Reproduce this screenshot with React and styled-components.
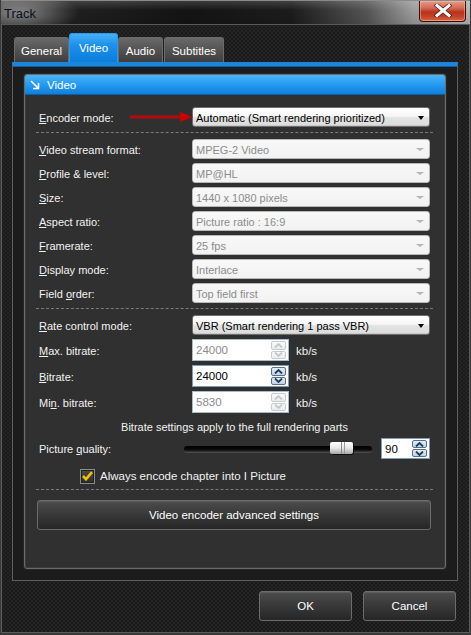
import React from "react";
import styled, { createGlobalStyle } from "styled-components";

const FONT = `"Liberation Sans", Arial, sans-serif`;

const GlobalStyle = createGlobalStyle`
  html, body { margin: 0; padding: 0; background: #000; }
  body { font-family: ${FONT}; font-size: 11px; }
  * { box-sizing: border-box; }
`;

const Window = styled.div`
  width: 471px;
  height: 635px;
  display: flex;
  flex-direction: column;
  background-color: #1d1d1d;
  background-image: repeating-conic-gradient(#252525 0 25%, #1a1a1a 0 50%);
  background-size: 4px 4px;
  border: 1px solid #3a3a3a;
  border-top: none;
  border-bottom-width: 2px;
  box-shadow: inset 1px 0 0 #5c5c5c, inset -1px 0 0 #5c5c5c, inset 0 -1px 0 #5c5c5c;
  font-family: ${FONT};
  overflow: hidden;
`;

const TitleBar = styled.div`
  height: 25px;
  flex: none;
  display: flex;
  align-items: center;
  justify-content: space-between;
  padding: 0 4px 0 3px;
  background:
    linear-gradient(180deg, rgba(255,255,255,0.16) 0, rgba(255,255,255,0) 40%, rgba(0,0,0,0.1) 100%),
    radial-gradient(ellipse 60px 22px at 18px 12px, rgba(150,150,150,0.85) 0, rgba(120,120,120,0.5) 55%, rgba(0,0,0,0) 100%),
    linear-gradient(90deg, #3a3a3a 0, #202020 14%, #141414 40%, #1c1c1c 62%, #555 78%, #9c9c9c 88%, #b4b4b4 100%);
  border-top: 1px solid #8a8a8a;
  border-bottom: 1px solid #5a5a5a;
`;

const TitleText = styled.span`
  font-size: 13px;
  color: #06101c;
  margin-top: 1px;
`;

const CloseButton = styled.div`
  width: 47px;
  height: 21px;
  margin-top: -3px;
  border: 1px solid #3a0f08;
  border-top: none;
  border-radius: 0 0 4px 4px;
  background: linear-gradient(180deg, #e89a88 0, #d26a55 35%, #b8321c 55%, #c4442a 80%, #d86a48 100%);
  box-shadow: inset 0 0 0 1px rgba(255, 200, 180, 0.45);
  display: flex;
  align-items: center;
  justify-content: center;
`;

const Body = styled.div`
  flex: 1;
  display: flex;
  flex-direction: column;
  padding: 8px 12px 0 11px;
`;

const TabStrip = styled.div`
  height: 29px;
  display: flex;
  align-items: flex-end;
  padding-left: 2px;
`;

const Tab = styled.div`
  width: ${p => p.$w}px;
  height: ${p => (p.$active ? 29 : 25)}px;
  margin-right: ${p => (p.$gap ? 1 : 0)}px;
  display: flex;
  align-items: center;
  justify-content: center;
  color: #fff;
  font-size: 11.5px;
  padding-top: ${p => (p.$active ? 0 : 1)}px;
  border: 1px solid ${p => (p.$active ? "#2a9af0" : "#6a6a6a")};
  border-bottom: none;
  border-radius: 3px 3px 0 0;
  background: ${p =>
    p.$active
      ? "linear-gradient(180deg, #44b0f6 0, #1d90ea 40%, #0b7ddc 100%)"
      : "linear-gradient(180deg, #6a6a6a 0, #555 45%, #3e3e3e 100%)"};
`;

const Panel = styled.div`
  height: 519px;
  display: flex;
  flex-direction: column;
  padding: 8px 11px 0 11px;
  background: #1c1c1c;
  border: 1px solid #5e5e5e;
  border-top: 4px solid #1a86dc;
  box-shadow: inset 0 1px 0 #0d5fa8;
`;

const Group = styled.div`
  height: 495px;
  display: flex;
  flex-direction: column;
  background: #303030;
  border: 1px solid #6a6a6a;
  border-radius: 3px;
  box-shadow: 0 0 0 1px #262626, inset 0 0 0 1px #3c3c3c;
  overflow: hidden;
`;

const GroupHeader = styled.div`
  height: 20px;
  flex: none;
  display: flex;
  align-items: center;
  gap: 7px;
  padding-left: 5px;
  color: #fff;
  font-size: 11.5px;
  background: linear-gradient(180deg, #4ab6f8 0, #2a9cf0 45%, #0f80de 100%);
  border-bottom: 1px solid #0a5fa8;
`;

const GroupBody = styled.div`
  display: flex;
  flex-direction: column;
  padding: 12px 15px 0 14px;
`;

const FieldRow = styled.div`
  position: relative;
  display: grid;
  grid-template-columns: 153px 1fr;
  align-items: center;
  height: 20px;
`;

const Label = styled.span`
  color: #f2f2f2;
  font-size: 11px;
  white-space: nowrap;
  padding-top: 1px;
`;

const Combo = styled.div`
  height: 20px;
  display: flex;
  align-items: center;
  justify-content: space-between;
  padding: 1px 5px 0 3px;
  border: 1px solid ${p => (p.$enabled ? "#6e6e6e" : "#b8b8b8")};
  border-radius: 3px;
  color: ${p => (p.$enabled ? "#000" : "#8c8c8c")};
  font-size: 11px;
  white-space: nowrap;
  background: ${p =>
    p.$enabled
      ? "linear-gradient(180deg, #ffffff 0, #f6f6f6 45%, #e2e2e2 55%, #dcdcdc 100%)"
      : "linear-gradient(180deg, #f8f8f8 0, #f2f2f2 100%)"};
  box-shadow: ${p => (p.$enabled ? "inset 0 -1px 0 #c8c8c8" : "none")};
`;

const ComboArrow = styled.span`
  width: 0;
  height: 0;
  border-left: ${p => (p.$enabled ? 3.5 : 4.5)}px solid transparent;
  border-right: ${p => (p.$enabled ? 3.5 : 4.5)}px solid transparent;
  border-top: ${p => (p.$enabled ? 4 : 3)}px solid ${p => (p.$enabled ? "#000" : "#b4b4b4")};
`;

const Divider = styled.div`
  height: 0;
  border-top: 1px dashed #7c7c7c;
  margin: ${p => p.$mt}px -3px ${p => p.$mb}px -3px;
`;

const Stack = styled.div`
  display: flex;
  flex-direction: column;
  gap: ${p => p.$gap}px;
  margin-top: ${p => p.$mt || 0}px;
`;

const SpinRow = styled.div`
  display: grid;
  grid-template-columns: 153px 97px auto;
  align-items: center;
  height: 22px;
`;

const SpinBox = styled.div`
  width: ${p => p.$w}px;
  height: ${p => p.$h || 22}px;
  display: flex;
  align-items: center;
  justify-content: space-between;
  padding: 1px 2px 1px 3px;
  background: #fff;
  border: 1px solid ${p => (p.$enabled ? "#7f9db9" : "#a9bccd")};
  color: ${p => (p.$enabled ? "#000" : "#8c8c8c")};
  font-size: 11.5px;
`;

const SpinButtons = styled.div`
  width: 15px;
  align-self: stretch;
  display: flex;
  flex-direction: column;
  gap: 1px;
`;

const SpinBtn = styled.div`
  flex: 1;
  display: flex;
  align-items: center;
  justify-content: center;
  border: 1px solid ${p => (p.$enabled ? "#56708e" : "#c4ccd6")};
  border-radius: 2px;
  background: ${p =>
    p.$enabled
      ? "linear-gradient(180deg, #e4ecf6 0, #c2d2e4 100%)"
      : "linear-gradient(180deg, #fafafa 0, #ececec 100%)"};
`;

const Unit = styled.span`
  color: #f2f2f2;
  font-size: 11.5px;
  padding-left: 7px;
  padding-top: 2px;
`;

const Note = styled.div`
  margin-top: 7px;
  height: 14px;
  text-align: center;
  color: #f2f2f2;
  font-size: 11px;
  line-height: 14px;
`;

const QualityRow = styled.div`
  display: flex;
  align-items: center;
  height: 21px;
  margin-top: 4px;
`;

const QualityLabel = styled(Label)`
  width: 145px;
`;

const SliderTrack = styled.div`
  position: relative;
  width: 189px;
  height: 6px;
  margin-right: 9px;
  border-radius: 3px;
  background: linear-gradient(180deg, #000 0, #0a0a0a 60%, #3a3a3a 100%);
  box-shadow: 0 1px 0 #4a4a4a;
`;

const SliderThumb = styled.div`
  position: absolute;
  left: 146px;
  top: -4px;
  width: 23px;
  height: 12px;
  border-radius: 2px;
  background:
    linear-gradient(90deg, transparent 0 11px, #8a8a8a 11px 12px, transparent 12px 14px, #9a9a9a 14px 15px, transparent 15px),
    linear-gradient(180deg, #ffffff 0, #e8e8e8 50%, #a8a8a8 100%);
  box-shadow: 1px 1px 0 #111;
`;

const CheckRow = styled.div`
  display: flex;
  align-items: center;
  gap: 5px;
  height: 16px;
  margin-top: 9px;
  padding-left: 41px;
`;

const CheckBox = styled.div`
  width: 15px;
  height: 15px;
  display: flex;
  align-items: center;
  justify-content: center;
  border: 1px solid #8a8a8a;
  background: linear-gradient(180deg, #4a4a4a, #2e2e2e);
  box-shadow: inset 0 0 0 1px #222;
`;

const CheckLabel = styled.span`
  color: #f2f2f2;
  font-size: 11.5px;
`;

const ButtonBase = styled.div`
  height: 30px;
  display: flex;
  align-items: center;
  justify-content: center;
  color: #fff;
  font-size: 11.5px;
  border: 1px solid #6c6c6c;
  border-radius: 3px;
  background: linear-gradient(180deg, #4c4c4c 0, #3a3a3a 45%, #262626 100%);
  box-shadow: inset 0 1px 0 #5c5c5c;
`;

const WideButton = styled(ButtonBase)`
  margin: 0 -1px 0 -2px;
`;

const DialogButton = styled(ButtonBase)`
  width: 93px;
`;

const Footer = styled.div`
  display: flex;
  justify-content: flex-end;
  gap: 11px;
  margin-top: 10px;
  padding-right: 2px;
`;

const ArrowMark = styled.svg`
  position: absolute;
  left: 91px;
  top: 4px;
`;

const Chevron = ({ up, enabled }) => (
  <svg width="9" height="5" viewBox="0 0 9 5">
    <polyline
      points={up ? "1,4.5 4.5,1 8,4.5" : "1,0.5 4.5,4 8,0.5"}
      fill="none"
      stroke={enabled ? "#1f3a5c" : "#c2c8d0"}
      strokeWidth="1.8"
    />
  </svg>
);

const Spinner = ({ enabled }) => (
  <SpinButtons>
    <SpinBtn $enabled={enabled}>
      <Chevron up enabled={enabled} />
    </SpinBtn>
    <SpinBtn $enabled={enabled}>
      <Chevron enabled={enabled} />
    </SpinBtn>
  </SpinButtons>
);

const formatRows = [
  [<><u>V</u>ideo stream format:</>, "MPEG-2 Video"],
  [<><u>P</u>rofile &amp; level:</>, "MP@HL"],
  [<><u>S</u>ize:</>, "1440 x 1080 pixels"],
  [<><u>A</u>spect ratio:</>, "Picture ratio : 16:9"],
  [<><u>F</u>ramerate:</>, "25  fps"],
  [<><u>D</u>isplay mode:</>, "Interlace"],
  [<>Field <u>o</u>rder:</>, "Top field first"],
];

const bitrateRows = [
  [<><u>M</u>ax. bitrate:</>, "24000", false],
  [<><u>B</u>itrate:</>, "24000", true],
  [<>Mi<u>n</u>. bitrate:</>, "5830", false],
];

const tabs = [
  { name: "General", w: 55, gap: false },
  { name: "Video", w: 49, gap: false, active: true },
  { name: "Audio", w: 45, gap: true },
  { name: "Subtitles", w: 60, gap: false },
];

export default function App() {
  return (
    <>
      <GlobalStyle />
      <Window>
        <TitleBar>
          <TitleText>Track</TitleText>
          <CloseButton>
            <svg width="18" height="13" viewBox="0 0 18 13">
              <path d="M3 1.5 L15 11.5 M15 1.5 L3 11.5" stroke="#5a1a10" strokeWidth="4.6" strokeLinecap="square" />
              <path d="M3 1.5 L15 11.5 M15 1.5 L3 11.5" stroke="#ffffff" strokeWidth="3" strokeLinecap="square" />
            </svg>
          </CloseButton>
        </TitleBar>
        <Body>
          <TabStrip>
            {tabs.map(t => (
              <Tab key={t.name} $w={t.w} $active={t.active} $gap={t.gap}>
                {t.name}
              </Tab>
            ))}
          </TabStrip>
          <Panel>
            <Group>
              <GroupHeader>
                <svg width="10" height="10" viewBox="0 0 10 10">
                  <path d="M1 1 L8.5 8.5 M8.5 3 V8.5 H3" fill="none" stroke="#fff" strokeWidth="1.6" />
                </svg>
                Video
              </GroupHeader>
              <GroupBody>
                <FieldRow>
                  <Label><u>E</u>ncoder mode:</Label>
                  <Combo $enabled>
                    Automatic (Smart rendering prioritized)
                    <ComboArrow $enabled />
                  </Combo>
                  <ArrowMark width="64" height="12" viewBox="0 0 64 12">
                    <path d="M1 6 H52" stroke="#b00c0c" strokeWidth="3" strokeLinecap="round" />
                    <path d="M50 1 L63 6 L50 11 Z" fill="#c00" />
                  </ArrowMark>
                </FieldRow>
                <Divider $mt={5} $mb={6} />
                <Stack $gap={4}>
                  {formatRows.map(([label, value], i) => (
                    <FieldRow key={i}>
                      <Label>{label}</Label>
                      <Combo>
                        {value}
                        <ComboArrow />
                      </Combo>
                    </FieldRow>
                  ))}
                </Stack>
                <Divider $mt={5} $mb={6} />
                <FieldRow>
                  <Label><u>R</u>ate control mode:</Label>
                  <Combo $enabled>
                    VBR (Smart rendering 1 pass VBR)
                    <ComboArrow $enabled />
                  </Combo>
                </FieldRow>
                <Stack $gap={4} $mt={4}>
                  {bitrateRows.map(([label, value, enabled], i) => (
                    <SpinRow key={i}>
                      <Label>{label}</Label>
                      <SpinBox $w={97} $enabled={enabled}>
                        {value}
                        <Spinner enabled={enabled} />
                      </SpinBox>
                      <Unit>kb/s</Unit>
                    </SpinRow>
                  ))}
                </Stack>
                <Note>Bitrate settings apply to the full rendering parts</Note>
                <QualityRow>
                  <QualityLabel>Picture <u>q</u>uality:</QualityLabel>
                  <SliderTrack>
                    <SliderThumb />
                  </SliderTrack>
                  <SpinBox $w={49} $h={21} $enabled>
                    90
                    <Spinner enabled />
                  </SpinBox>
                </QualityRow>
                <CheckRow>
                  <CheckBox>
                    <svg width="11" height="10" viewBox="0 0 11 10">
                      <path d="M1 5 L4 8.2 L10 1.2" fill="none" stroke="#f2c100" strokeWidth="2.6" />
                    </svg>
                  </CheckBox>
                  <CheckLabel>Always encode chapter into I Picture</CheckLabel>
                </CheckRow>
                <Divider $mt={5} $mb={10} />
                <WideButton>Video encoder advanced settings</WideButton>
              </GroupBody>
            </Group>
          </Panel>
          <Footer>
            <DialogButton>OK</DialogButton>
            <DialogButton>Cancel</DialogButton>
          </Footer>
        </Body>
      </Window>
    </>
  );
}
